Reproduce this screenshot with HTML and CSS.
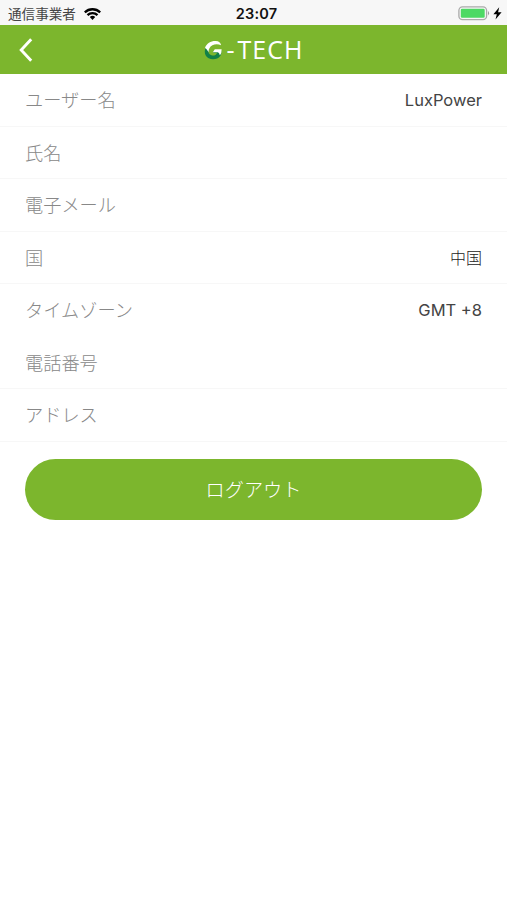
FILE: index.html
```
<!DOCTYPE html>
<html lang="ja">
<head>
<meta charset="UTF-8">
<meta name="viewport" content="width=device-width, initial-scale=1.0">
<title>G-TECH</title>
<link rel="stylesheet" href="styles.css">
</head>
<body>
  <div class="status">
    <div class="carrier">
      <span>通信事業者</span>
      <svg class="wifi" width="17" height="12" viewBox="0 0 17 12">
        <path d="M0.8 4.3a11.2 11.2 0 0 1 15.4 0M3.5 7.1a7.2 7.2 0 0 1 10 0" fill="none" stroke="#000" stroke-width="2.3"/>
        <path d="M5.8 9.1a4 4 0 0 1 5.4 0L8.5 11.9z"/>
      </svg>
    </div>
    <div class="time">23:07</div>
    <div class="power">
      <svg width="32" height="15" viewBox="0 0 32 15">
        <rect x="0.9" y="0.9" width="27.7" height="12.8" rx="3.6" fill="#f7f7f7" stroke="#aaa" stroke-width="1.3"/>
        <rect x="2.8" y="2.8" width="23.9" height="9" rx="1.3" fill="#4cd964"/>
        <path d="M30 5.1q2.1 2.2 0 4.4z" fill="#999"/>
      </svg>
      <svg class="bolt" width="9" height="13" viewBox="0 0 9 13">
        <path d="M6.2 0.2L0.4 7.2h3.4L2.5 12.6 8.6 5.3H5.1z"/>
      </svg>
    </div>
  </div>

  <div class="header">
    <svg class="back" width="14" height="24" viewBox="0 0 14 24">
      <path d="M12.2 1.2L2.2 12l10 10.8" fill="none" stroke="#fff" stroke-width="2.9"/>
    </svg>
    <div class="logo">
      <svg width="19" height="20" viewBox="0 0 19 20">
        <path d="M1.6 8C-0.2 12 1 16.4 4.6 18.3c4 2 9.4 1 11.6-2.2 1.1-1.8 1.3-3.5 1.1-5.4H10l-1 2h4.2c-1.2 2.5-3.5 3.4-5.7 2.6C4.4 14.2 3.6 11 4.6 8z" fill="#128048"/>
        <path d="M1 8C2.6 3.4 7 0.9 11.8 1.1c3 0.1 4.9 1.6 5.3 4.1C12.5 3.2 7.4 4.5 5.3 8.4c-0.7 1.4-0.8 2.4-0.6 3.8C3.4 10.4 2.6 8.8 1 8z" fill="#fff"/>
        <path d="M8.8 12.3l2-3h6.8l-0.2 3c-0.3 1.3-0.8 2.2-1.7 3-0.1-1.4-0.5-2.4-2-3z" fill="#fff"/>
      </svg>
      <span class="dash">-</span>
      <span class="word">TECH</span>
    </div>
  </div>

  <div class="list">
    <div class="row"><span>ユーザー名</span><span class="value">LuxPower</span></div>
    <div class="row"><span>氏名</span></div>
    <div class="row"><span>電子メール</span></div>
    <div class="row"><span>国</span><span class="value cjk">中国</span></div>
    <div class="row no-line"><span>タイムゾーン</span><span class="value">GMT +8</span></div>
    <div class="row"><span>電話番号</span></div>
    <div class="row"><span>アドレス</span></div>
  </div>

  <button class="logout">ログアウト</button>
</body>
</html>
```
FILE: styles.css
```
*{
  box-sizing: border-box;
}

body{
  margin: 0;
  background-color: white;
  font-family: Inter, "Noto Sans CJK JP", sans-serif;
}

.status{
  display: grid;
  grid-template-columns: 1fr auto 1fr;
  align-items: center;
  height: 25px;
  padding: 2px 5px 0 8px;
  background-color: #f7f7f7;
}

.carrier{
  display: flex;
  align-items: center;
  gap: 8px;
  font-size: 13.6px;
  line-height: 20px;
  color: #444;
}

.time{
  font-size: 14.5px;
  font-weight: 600;
  letter-spacing: 0.2px;
  color: #111;
  padding-left: 3px;
}

.power{
  display: flex;
  justify-content: flex-end;
  align-items: center;
  gap: 3px;
}

.header{
  display: grid;
  grid-template-columns: 1fr auto 1fr;
  align-items: center;
  height: 49px;
  padding: 0 19px;
  background-color: #7cb62d;
}

.logo{
  display: flex;
  align-items: center;
  color: white;
  font-family: "Open Sans", sans-serif;
  line-height: 30px;
}

.dash{
  font-size: 25px;
  margin: 0 3px 0 4px;
}

.word{
  font-size: 25px;
  letter-spacing: 1px;
}

.dash,
.word{
  padding-bottom: 2px;
}

.row{
  display: flex;
  justify-content: space-between;
  align-items: center;
  height: 52.5px;
  padding: 1px 25px 0;
  border-bottom: 1px solid #f7f7f7;
  font-size: 18.2px;
  font-weight: 300;
  line-height: 24px;
  color: #888;
}

.no-line{
  border-bottom-color: transparent;
}

.value{
  font-size: 16.5px;
  font-weight: 400;
  color: #444;
}

.cjk{
  font-size: 16px;
  font-weight: 300;
  color: #222;
}

.logout{
  display: block;
  width: 457px;
  height: 61px;
  margin: 17.5px auto 0;
  padding: 0 0 2px;
  border: none;
  border-radius: 31px;
  background-color: #7cb62d;
  color: white;
  font-family: "Noto Sans CJK JP", sans-serif;
  font-size: 19.2px;
  font-weight: 300;
}
```
